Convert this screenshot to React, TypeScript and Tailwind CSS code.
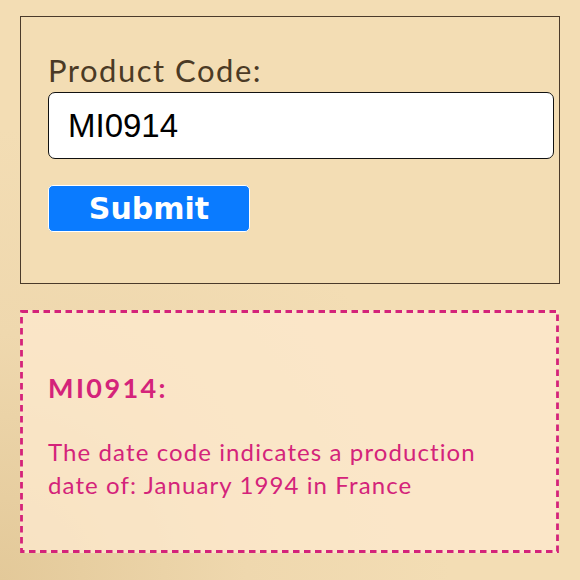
import React, { useState } from 'react';

export default function App() {
  const [code, setCode] = useState('MI0914');

  return (
    <div className="min-h-[580px] w-full bg-[radial-gradient(circle_at_0%_100%,#e3c999_0%,#efd8ae_30%,#f3ddb4_55%)] px-5 pt-4 pb-6 font-['Lato',sans-serif]">
      {/* lookup form */}
      <form
        onSubmit={(e) => e.preventDefault()}
        className="h-[268px] w-[540px] border border-[#4a3a2a] bg-[#f3ddb4] pl-[27px] pr-[6px] pt-[34px]"
      >
        <label className="block text-[31px] leading-[38px] tracking-[1.5px] text-[#4b3a25]">Product Code:</label>
        <input
          value={code}
          onChange={(e) => setCode(e.target.value)}
          className="mt-[3px] h-[67px] w-[506px] rounded-[7px] border-[1.5px] border-[#111] bg-white px-[19px] font-['Liberation_Sans',Arial,sans-serif] text-[33px] text-black outline-none"
        />
        <button
          type="submit"
          className="mt-[26px] flex h-[47px] w-[202px] items-center justify-center rounded-[5px] border border-white bg-[#0a7bff] font-['DejaVu_Sans',sans-serif] text-[30px] font-bold leading-none text-white"
        >
          Submit
        </button>
      </form>

      {/* result */}
      <div className="relative mt-[26px] h-[243px] w-[539px] bg-[#fde8cd]/80 pl-[28px] pt-[61px] text-[#d4237a]">
        <svg className="pointer-events-none absolute inset-0" width="539" height="243">
          <rect
            x="1.5"
            y="1.5"
            width="536"
            height="240"
            fill="none"
            stroke="#d4237a"
            strokeWidth="2.8"
            strokeDasharray="6.5 4.5"
          />
        </svg>
        <h2 className="text-[27px] font-bold leading-[34px] tracking-[2.4px]">MI0914:</h2>
        <p className="mt-[30px] text-[24px] leading-[33px] tracking-[1.1px]">
          The date code indicates a production
          <br />
          date of: January 1994 in France
        </p>
      </div>
    </div>
  );
}
